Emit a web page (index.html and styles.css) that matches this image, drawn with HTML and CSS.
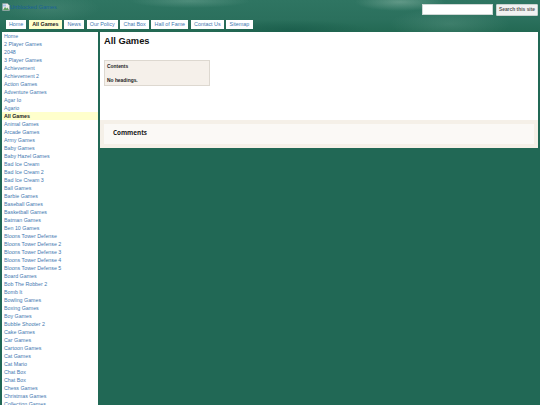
FILE: index.html
```html
<!DOCTYPE html>
<html lang="en">
  <head>
    <meta charset="utf8" />
    <meta name="viewport" content="width=device-width, initial-scale=1" />
    <title>All Games</title>
    <link rel="stylesheet" href="styles.css">
  </head>
  <body>
    <div class="header">
      <div class="header-top">
        <a class="logo" href="#">
          <svg class="broken-img" width="8" height="8" viewBox="0 0 16 16">
            <path d="M1 1h10l4 4v10H1z" fill="#e8e8e8" stroke="#8a9a9a" />
            <path d="M2 14l4-6 3 3 2-2 3 5z" fill="#5fa05f" />
            <path d="M2 3h6v4H2z" fill="#a9c4ea" />
          </svg><span>Unblocked Games</span>
        </a>
        <form class="search">
          <input class="search-input" type="text" />
          <button class="search-btn" type="button">Search this site</button>
        </form>
      </div>
      <ul class="tabs">
        <li><a href="#">Home</a></li>
        <li class="active"><a href="#">All Games</a></li>
        <li><a href="#">News</a></li>
        <li><a href="#">Our Policy</a></li>
        <li><a href="#">Chat Box</a></li>
        <li><a href="#">Hall of Fame</a></li>
        <li><a href="#">Contact Us</a></li>
        <li><a href="#">Sitemap</a></li>
      </ul>
    </div>
    <div class="main-layout">
      <ul class="sidebar">
        <li><a href="#">Home</a></li>
        <li><a href="#">2 Player Games</a></li>
        <li><a href="#">2048</a></li>
        <li><a href="#">3 Player Games</a></li>
        <li><a href="#">Achievement</a></li>
        <li><a href="#">Achievement 2</a></li>
        <li><a href="#">Action Games</a></li>
        <li><a href="#">Adventure Games</a></li>
        <li><a href="#">Agar Io</a></li>
        <li><a href="#">Agario</a></li>
        <li class="current"><a href="#">All Games</a></li>
        <li><a href="#">Animal Games</a></li>
        <li><a href="#">Arcade Games</a></li>
        <li><a href="#">Army Games</a></li>
        <li><a href="#">Baby Games</a></li>
        <li><a href="#">Baby Hazel Games</a></li>
        <li><a href="#">Bad Ice Cream</a></li>
        <li><a href="#">Bad Ice Cream 2</a></li>
        <li><a href="#">Bad Ice Cream 3</a></li>
        <li><a href="#">Ball Games</a></li>
        <li><a href="#">Barbie Games</a></li>
        <li><a href="#">Baseball Games</a></li>
        <li><a href="#">Basketball Games</a></li>
        <li><a href="#">Batman Games</a></li>
        <li><a href="#">Ben 10 Games</a></li>
        <li><a href="#">Bloons Tower Defense</a></li>
        <li><a href="#">Bloons Tower Defense 2</a></li>
        <li><a href="#">Bloons Tower Defense 3</a></li>
        <li><a href="#">Bloons Tower Defense 4</a></li>
        <li><a href="#">Bloons Tower Defense 5</a></li>
        <li><a href="#">Board Games</a></li>
        <li><a href="#">Bob The Robber 2</a></li>
        <li><a href="#">Bomb It</a></li>
        <li><a href="#">Bowling Games</a></li>
        <li><a href="#">Boxing Games</a></li>
        <li><a href="#">Boy Games</a></li>
        <li><a href="#">Bubble Shooter 2</a></li>
        <li><a href="#">Cake Games</a></li>
        <li><a href="#">Car Games</a></li>
        <li><a href="#">Cartoon Games</a></li>
        <li><a href="#">Cat Games</a></li>
        <li><a href="#">Cat Mario</a></li>
        <li><a href="#">Chat Box</a></li>
        <li><a href="#">Chat Box</a></li>
        <li><a href="#">Chess Games</a></li>
        <li><a href="#">Christmas Games</a></li>
        <li><a href="#">Collection Games</a></li>
      </ul>
      <div class="content">
        <div class="article">
          <h1>All Games</h1>
          <div class="toc">
            <div class="toc-title">Contents</div>
            <div class="toc-empty">No headings.</div>
          </div>
        </div>
        <div class="comments">
          <div class="comments-inner">Comments</div>
        </div>
      </div>
    </div>
  </body>
</html>
```

FILE: styles.css
```css
/* Reset */
body, html {
  margin: 0;
  padding: 0;
  font-family: "Liberation Sans", Arial, sans-serif;
}
* {
  box-sizing: border-box;
}
html {
  height: 100%;
  overflow: hidden;
}
body {
  min-height: 100%;
  background: #216855;
}
a {
  text-decoration: none;
}
ul {
  margin: 0;
  padding: 0;
  list-style: none;
}

/* Header */
.header {
  height: 32px;
  padding: 3px 2px 0;
  background:
    radial-gradient(ellipse 45px 9px at 400px 2px, rgba(170, 205, 190, .4), transparent),
    radial-gradient(ellipse 60px 7px at 190px 1px, rgba(150, 195, 180, .3), transparent),
    radial-gradient(ellipse 50px 14px at 50px 8px, rgba(120, 170, 155, .22), transparent),
    radial-gradient(ellipse 60px 16px at 450px 24px, rgba(140, 185, 170, .22), transparent),
    radial-gradient(ellipse 80px 10px at 290px 30px, rgba(20, 85, 70, .5), transparent),
    linear-gradient(#2f7562, #2b705d 60%, #236953);
}
.header-top {
  display: flex;
  justify-content: space-between;
  align-items: flex-start;
  height: 17px;
}
.logo {
  display: flex;
  font-size: 5.7px;
  line-height: 8px;
  color: #1a6298;
}
.broken-img {
  display: block;
  flex: none;
}
.search {
  display: flex;
  gap: 3px;
  margin: 1px 0 0;
}
.search-input {
  width: 71px;
  height: 11px;
  padding: 0;
  border: 1px solid #cfd8d5;
  background: #fff;
}
.search-btn {
  width: 42px;
  height: 12px;
  margin-top: -.5px;
  padding: 0;
  border: 1px solid #c9d3d0;
  border-radius: 1px;
  background: #f1f1f1;
  color: #555;
  font: bold 4.9px "Liberation Sans", Arial, sans-serif;
}
.tabs {
  display: flex;
  gap: 2.5px;
  padding-left: 3.7px;
}
.tabs a {
  display: block;
  height: 8.5px;
  padding: 0 3.2px;
  background: #fff;
  color: #3f78b0;
  font-size: 5.4px;
  line-height: 8.5px;
  white-space: nowrap;
}
.tabs .active a {
  background: #ffffcc;
  color: #222;
  font-weight: bold;
}

/* Page */
.main-layout {
  display: flex;
  align-items: flex-start;
  gap: 2px;
  padding: 0 2px;
}
.sidebar {
  flex: none;
  width: 96px;
  padding-bottom: 10px;
  background: #fff;
}
.sidebar a {
  display: block;
  height: 8px;
  padding-left: 2px;
  color: #3f78b0;
  font-size: 5.3px;
  line-height: 8px;
  white-space: nowrap;
}
.sidebar .current a {
  background: #ffffcc;
  color: #222;
  font-weight: bold;
}
.content {
  flex: 1;
}
.article {
  height: 88px;
  padding: 3px 4px 0;
  background: #fff;
}
h1 {
  margin: 0 0 13px;
  color: #111;
  font-size: 9.3px;
  line-height: 12px;
}
.toc {
  width: 106px;
  height: 25.5px;
  padding: 2px 2px 0;
  border: 1px solid #ddd8d0;
  background: #f5f0ea;
  color: #222;
  font-size: 4.9px;
  font-weight: bold;
}
.toc-title {
  line-height: 7px;
  margin-bottom: 7px;
}
.toc-empty {
  line-height: 7px;
}
.comments {
  height: 28px;
  padding: 4px;
  background: #f5f0e8;
}
.comments-inner {
  height: 20px;
  padding-left: 9px;
  background: #fbf9f6;
  color: #222;
  font: bold 6.3px/17px "Open Sans", sans-serif;
}
```
